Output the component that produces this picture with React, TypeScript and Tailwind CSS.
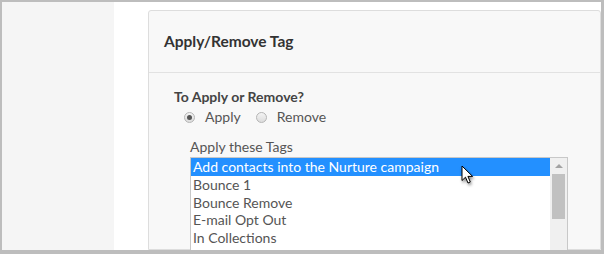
import React from 'react';

const tags = [
  'Add contacts into the Nurture campaign',
  'Bounce 1',
  'Bounce Remove',
  'E-mail Opt Out',
  'In Collections',
  'New Customer',
];

const Radio: React.FC<{ checked?: boolean; label: string }> = ({ checked, label }) => (
  <label className="flex items-center gap-[10px]">
    <span className="w-[11px] h-[11px] rounded-full border border-[#b5b5b5] bg-gradient-to-b from-[#f4f4f4] to-[#dcdcdc] flex items-center justify-center">
      {checked && <span className="w-[5px] h-[5px] rounded-full bg-[#555]" />}
    </span>
    <span>{label}</span>
  </label>
);

const Cursor = () => (
  <svg
    className="absolute left-[459px] top-[163px] drop-shadow-[1px_2px_1.5px_rgba(0,0,0,0.45)]"
    width="14"
    height="20"
    viewBox="0 0 14 20"
  >
    <path
      d="M1 1 L1 15.5 L4.5 12.2 L7 18 L9.3 17 L6.9 11.4 L11.6 11.4 Z"
      fill="#fff"
      stroke="#000"
      strokeWidth="1"
      strokeLinejoin="round"
    />
  </svg>
);

export default function App() {
  return (
    <div
      className="relative w-[604px] h-[254px] overflow-hidden border-t-2 border-l-2 border-r-[3px] border-b-4 border-[#bdbdbd] bg-white flex"
      style={{ fontFamily: 'Lato, "Open Sans", sans-serif' }}
    >
      <div className="w-[112px] shrink-0 bg-[#f5f5f5]" />
      <div className="flex-1 pl-[34px] pt-[8px] min-w-0">
        <div className="h-full border border-[#dddddd] rounded-t-[3px] bg-[#f8f8f8] flex flex-col">
          {/* Header */}
          <div className="h-[62px] shrink-0 flex items-center px-[15px] border-b border-[#e2e2e2]">
            <h2 className="text-[15.5px] font-bold text-[#333]">Apply/Remove Tag</h2>
          </div>

          {/* Body */}
          <div className="pl-[25px] pt-[15px] text-[14px] text-[#555]">
            <div className="font-bold text-[#444] leading-[18px]">To Apply or Remove?</div>
            <div className="flex items-center gap-[15px] pl-[10px] mt-[2px] leading-[18px]">
              <Radio checked label="Apply" />
              <Radio label="Remove" />
            </div>
            <div className="pl-[16px] mt-[12px]">
              <div className="leading-[18px] mb-[1px]">Apply these Tags</div>
              <div className="w-[378px] h-[120px] border border-[#c8c8c8] bg-white flex">
                <ul className="flex-1">
                  {tags.map((t, i) => (
                    <li
                      key={t}
                      className={
                        i === 0
                          ? 'h-[18px] leading-[18px] pl-[2px] bg-[#2390ff] text-white'
                          : 'h-[17.6px] leading-[17.6px] pl-[2px] text-[#555]'
                      }
                    >
                      {t}
                    </li>
                  ))}
                </ul>
                <div className="w-[17px] bg-[#f0f0f0] flex flex-col items-center">
                  <div className="h-[16px] flex items-center justify-center">
                    <span className="w-0 h-0 border-l-[4px] border-r-[4px] border-b-[4px] border-l-transparent border-r-transparent border-b-[#a3a3a3]" />
                  </div>
                  <div className="w-[13px] h-[45px] bg-[#c1c1c1]" />
                </div>
              </div>
            </div>
          </div>
        </div>
      </div>
      <Cursor />
    </div>
  );
}
